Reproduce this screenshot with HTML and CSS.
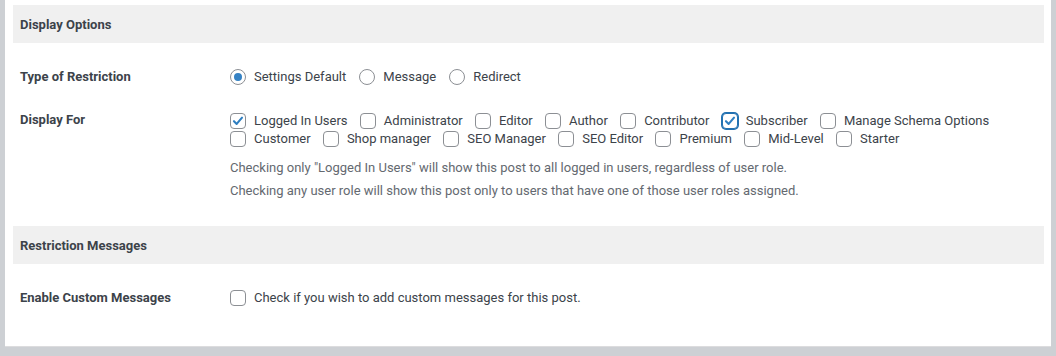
FILE: index.html
```html
<!DOCTYPE html>
<html>
<head>
<meta charset="utf-8">
<link rel="stylesheet" href="styles.css">
</head>
<body>
<div class="panel">
  <div class="section-head">Display Options</div>
  <div class="row row-type">
    <div class="label">Type of Restriction</div>
    <div class="field">
      <div class="opts">
        <label class="opt"><span class="radio checked"></span>Settings Default</label>
        <label class="opt"><span class="radio"></span>Message</label>
        <label class="opt"><span class="radio"></span>Redirect</label>
      </div>
    </div>
  </div>
  <div class="row row-for">
    <div class="label">Display For</div>
    <div class="field">
      <div class="opts wrap">
        <label class="opt"><span class="box"><svg viewBox="0 0 16 16"><path d="M3.4 8.2 L6.5 11.3 L12.6 4.2"/></svg></span>Logged In Users</label>
        <label class="opt"><span class="box"></span>Administrator</label>
        <label class="opt"><span class="box"></span>Editor</label>
        <label class="opt"><span class="box"></span>Author</label>
        <label class="opt"><span class="box"></span>Contributor</label>
        <label class="opt"><span class="box focus"><svg viewBox="0 0 16 16"><path d="M3.4 8.2 L6.5 11.3 L12.6 4.2"/></svg></span>Subscriber</label>
        <label class="opt"><span class="box"></span>Manage Schema Options</label>
      </div>
      <div class="opts wrap">
        <label class="opt"><span class="box"></span>Customer</label>
        <label class="opt"><span class="box"></span>Shop manager</label>
        <label class="opt"><span class="box"></span>SEO Manager</label>
        <label class="opt"><span class="box"></span>SEO Editor</label>
        <label class="opt"><span class="box"></span>Premium</label>
        <label class="opt"><span class="box"></span>Mid-Level</label>
        <label class="opt"><span class="box"></span>Starter</label>
      </div>
      <p class="desc first">Checking only "Logged In Users" will show this post to all logged in users, regardless of user role.</p>
      <p class="desc second">Checking any user role will show this post only to users that have one of those user roles assigned.</p>
    </div>
  </div>
  <div class="section-head">Restriction Messages</div>
  <div class="row row-msg">
    <div class="label">Enable Custom Messages</div>
    <div class="field">
      <div class="opts">
        <label class="opt"><span class="box"></span>Check if you wish to add custom messages for this post.</label>
      </div>
    </div>
  </div>
</div>
</body>
</html>
```
FILE: styles.css
```css
html, body {
  margin: 0;
  padding: 0;
  background: #cdd0d4;
  height: 356px;
  overflow: hidden;
}
body {
  font-family: Roboto, "Liberation Sans", Arial, sans-serif;
  color: #3c434a;
}
.panel {
  background: #fff;
  margin: 0 5px;
  padding: 5px 7px 0 8px;
  height: 341px;
  border-bottom: 1px solid #dcdcde;
  box-sizing: content-box;
}
.section-head {
  background: #f0f0f0;
  height: 38px;
  display: flex;
  align-items: center;
  padding: 0 7px;
  font-size: 13px;
  font-weight: 700;
  color: #3c434a;
}
.row {
  display: flex;
}
.label {
  width: 217px;
  padding-left: 7px;
  box-sizing: border-box;
  font-size: 13px;
  font-weight: 700;
  line-height: 16px;
  flex-shrink: 0;
}
.row-type { padding-top: 26px; }
.row-for { padding-top: 27px; padding-bottom: 26px; }
.row-msg { padding-top: 26px; }
.field { flex: 1; }
.opts {
  display: flex;
  flex-wrap: wrap;
  column-gap: 13px;
  font-size: 13px;
  line-height: 16px;
}
.opts.wrap { height: 18px; column-gap: 12.3px; }
.opt {
  display: flex;
  align-items: center;
  gap: 8px;
  white-space: nowrap;
}
.radio, .box {
  width: 16px;
  height: 16px;
  box-sizing: border-box;
  border: 1px solid #8c8f94;
  background: #fff;
  flex-shrink: 0;
  position: relative;
}
.radio { border-radius: 50%; }
.radio.checked::after {
  content: "";
  position: absolute;
  left: 3px;
  top: 3px;
  width: 8px;
  height: 8px;
  border-radius: 50%;
  background: #3582c4;
}
.box { border-radius: 4px; }
.box svg {
  display: block;
  width: 14px;
  height: 14px;
}
.box svg path {
  fill: none;
  stroke: #2f7fc1;
  stroke-width: 2.4;
  stroke-linecap: round;
  stroke-linejoin: round;
}
.box.focus {
  border-color: #2271b1;
  box-shadow: 0 0 0 1px #2271b1;
}
.desc {
  margin: 0;
  font-size: 13px;
  line-height: 18px;
  color: #646970;
}
.desc.first { margin-top: 11px; }
.desc.second { margin-top: 5px; }
```
